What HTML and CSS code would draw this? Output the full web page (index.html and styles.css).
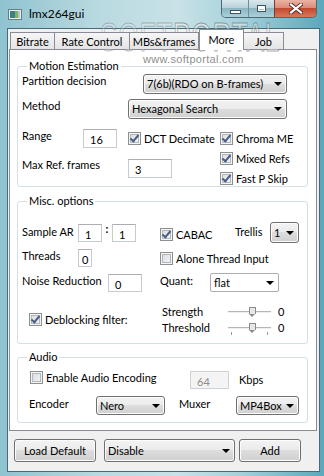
FILE: index.html
```html
<!DOCTYPE html>
<html>
<head>
    <title>lmx264gui</title>
    <link rel="stylesheet" href="styles.css">
</head>
<body>
<div class="window">
    <div class="titlebar">
        <svg class="app-icon" width="14" height="11" viewBox="0 0 14 11">
            <rect x="0.5" y="0.5" width="13" height="10" fill="#e8eef0" stroke="#6c7c84"/>
            <rect x="2" y="2" width="5" height="7" fill="#3f7f8c"/>
            <rect x="7" y="2" width="3" height="7" fill="#7fb55a"/>
            <rect x="10" y="2" width="2" height="7" fill="#b9c6cc"/>
        </svg>
        <span class="title">lmx264gui</span>
        <div class="caption-buttons">
            <div class="cap-btn cap-min"><span class="min-glyph"></span></div>
            <div class="cap-btn cap-max"><span class="max-glyph"></span></div>
            <div class="cap-btn cap-close">
                <svg width="14" height="11" viewBox="0 0 14 11">
                    <path d="M2 1.5 12 9.5M12 1.5 2 9.5" stroke="#5a2a22" stroke-width="4" stroke-linecap="square"/>
                    <path d="M2 1.5 12 9.5M12 1.5 2 9.5" stroke="#fff" stroke-width="2.2" stroke-linecap="square"/>
                </svg>
            </div>
        </div>
    </div>

    <div class="client">
        <div class="tabs">
            <div class="tab" style="width:45px">Bitrate</div>
            <div class="tab" style="width:75px">Rate Control</div>
            <div class="tab" style="width:69px">MBs&amp;frames</div>
            <div class="tab active" style="width:45px">More</div>
            <div class="tab" style="width:40px">Job</div>
        </div>

        <div class="page">
            <!-- Motion Estimation -->
            <fieldset class="group group-me">
                <legend>Motion Estimation</legend>
                <div class="row row-part">
                    <span class="lbl" style="width:121px">Partition decision</span>
                    <div class="combo" style="width:144px"><span>7(6b)(RDO on B-frames)</span><i class="arrow"></i></div>
                </div>
                <div class="row row-method">
                    <span class="lbl" style="width:106px">Method</span>
                    <div class="combo" style="width:159px"><span>Hexagonal Search</span><i class="arrow"></i></div>
                </div>
                <div class="me-grid">
                    <span class="lbl g-range">Range</span>
                    <div class="edit g-range-box" style="width:34px">16</div>
                    <label class="check g-dct"><span class="box on"></span>DCT Decimate</label>
                    <label class="check g-chroma"><span class="box on"></span>Chroma ME</label>
                    <label class="check g-mixed"><span class="box on"></span>Mixed Refs</label>
                    <label class="check g-fastp"><span class="box on"></span>Fast P Skip</label>
                    <span class="lbl g-maxref">Max Ref. frames</span>
                    <div class="edit g-maxref-box" style="width:44px">3</div>
                </div>
            </fieldset>

            <!-- Misc. options -->
            <fieldset class="group group-misc">
                <legend>Misc. options</legend>
                <div class="row row-sar">
                    <span class="lbl" style="width:56px">Sample AR</span>
                    <div class="edit" style="width:24px">1</div>
                    <span class="colon">:</span>
                    <div class="edit" style="width:24px">1</div>
                    <label class="check" style="margin-left:24px;width:75px"><span class="box on"></span>CABAC</label>
                    <span class="lbl" style="width:35px">Trellis</span>
                    <div class="combo combo-small" style="width:29px"><span>1</span><i class="arrow"></i></div>
                </div>
                <div class="row row-threads">
                    <span class="lbl" style="width:56px">Threads</span>
                    <div class="edit" style="width:14px;padding-left:3px">0</div>
                    <label class="check" style="margin-left:68px"><span class="box"></span>Alone Thread Input</label>
                </div>
                <div class="row row-noise">
                    <span class="lbl" style="width:86px">Noise Reduction</span>
                    <div class="edit" style="width:34px">0</div>
                    <span class="lbl" style="width:50px;margin-left:18px">Quant:</span>
                    <div class="combo combo-white" style="width:69px"><span>flat</span><i class="arrow"></i></div>
                </div>
                <div class="row row-deblock">
                    <label class="check deblock"><span class="box on"></span>Deblocking filter:</label>
                    <div class="sliders">
                        <div class="slider-row">
                            <span class="lbl" style="width:66px">Strength</span>
                            <div class="slider"><i class="thumb"></i></div>
                            <span class="lbl">0</span>
                        </div>
                        <div class="slider-row">
                            <span class="lbl" style="width:66px">Threshold</span>
                            <div class="slider ticks"><i class="thumb"></i></div>
                            <span class="lbl">0</span>
                        </div>
                    </div>
                </div>
            </fieldset>

            <!-- Audio -->
            <fieldset class="group group-audio">
                <legend>Audio</legend>
                <div class="row row-audio1">
                    <label class="check" style="margin-left:8px;width:160px"><span class="box"></span>Enable Audio Encoding</label>
                    <div class="edit disabled" style="width:39px">64</div>
                    <span class="lbl" style="margin-left:10px">Kbps</span>
                </div>
                <div class="row row-audio2">
                    <span class="lbl" style="width:67px;margin-left:7px">Encoder</span>
                    <div class="combo" style="width:69px"><span>Nero</span><i class="arrow"></i></div>
                    <span class="lbl" style="width:57px;margin-left:14px">Muxer</span>
                    <div class="combo" style="width:63px"><span>MP4Box</span><i class="arrow"></i></div>
                </div>
            </fieldset>
        </div>

        <div class="bottom-bar">
            <div class="button" style="width:82px">Load Default</div>
            <div class="combo" style="width:131px;margin-left:8px"><span>Disable</span><i class="arrow"></i></div>
            <div class="button" style="width:62px;margin-left:4px">Add</div>
        </div>
    </div>

    <div class="watermark">
        <span class="wm-big"><span class="wm-soft">SOFT</span><span class="wm-portal">PORTAL</span></span>
        <span class="wm-url">www.softportal.com</span>
    </div>
</div>
</body>
</html>
```

FILE: styles.css
```css
body {
    margin: 0;
    font-family: Lato, "Liberation Sans", sans-serif;
    font-size: 11px;
    color: #000;
}
.window {
    position: relative;
    width: 324px;
    height: 476px;
    box-sizing: border-box;
    padding: 0 4px 4px 7px;
    display: flex;
    flex-direction: column;
    background: linear-gradient(to right, #8fc3d0 0%, #b9d9e0 30%, #c8e2e7 55%, #a3d0da 75%, #5aa8bb 100%);
    overflow: hidden;
}
.titlebar {
    height: 28px;
    flex: none;
    display: flex;
    align-items: flex-start;
    padding-left: 1px;
}
.app-icon {
    margin-top: 9px;
}
.title {
    margin-left: 7px;
    margin-top: 7px;
    font-size: 12px;
    line-height: 14px;
}
.caption-buttons {
    margin-left: auto;
    margin-right: 3px;
    display: flex;
    height: 18px;
    border: 1px solid #4b6875;
    border-top: none;
    border-radius: 0 0 5px 5px;
    overflow: hidden;
    box-sizing: border-box;
}
.cap-btn {
    height: 100%;
    display: flex;
    align-items: center;
    justify-content: center;
    background: linear-gradient(#d9e8ec 0%, #b7d1d8 48%, #8eb5c0 50%, #a9d2dc 100%);
    border-left: 1px solid #6f8f9a;
}
.cap-min { width: 26px; border-left: none; }
.cap-max { width: 25px; }
.cap-close {
    width: 41px;
    background: linear-gradient(#ebb3a4 0%, #d98b75 48%, #c24a30 50%, #d9785a 100%);
    border-left: 1px solid #7a3a2e;
}
.min-glyph {
    width: 9px;
    height: 2px;
    margin-top: 7px;
    background: #fff;
    border: 1px solid #3d5561;
}
.max-glyph {
    width: 7px;
    height: 5px;
    border: 1px solid #3d5561;
    box-shadow: inset 0 0 0 1px #fff, inset 0 2px 0 1px #fff;
    background: #a7c4cc;
}
.client {
    flex: 1;
    display: flex;
    flex-direction: column;
    background: #f0f0f0;
    border: 1px solid #476b78;
    padding: 0 1px 0 1px;
}
.tabs {
    height: 20px;
    display: flex;
    align-items: flex-end;
    padding-left: 1px;
    position: relative;
    z-index: 1;
}
.tab {
    height: 17px;
    box-sizing: border-box;
    border: 1px solid #898c95;
    border-bottom: none;
    border-left: none;
    background: linear-gradient(#f6f6f6, #e4e4e4);
    text-align: center;
    line-height: 16px;
    padding-top: 1px;
}
.tab:first-child {
    border-left: 1px solid #898c95;
}
.tab.active {
    height: 21px;
    margin-bottom: -1px;
    background: #fff;
    border-left: 1px solid #898c95;
    line-height: 18px;
}
.page {
    height: 382px;
    box-sizing: border-box;
    margin-right: 1px;
    border: 1px solid #898c95;
    background: #fff;
    padding: 9px 8px 0 7px;
}
.group {
    margin: 0;
    padding: 0 4px 0 4px;
    border: 1px solid #d5dfe5;
    border-radius: 3px;
    min-width: 0;
}
.group legend {
    margin-left: 5px;
    padding: 0 2px;
    line-height: 14px;
}
.group-me { padding-top: 1px; height: 128px; box-sizing: border-box; }
.group-misc { margin-top: 7px; height: 150px; box-sizing: border-box; }
.group-audio { margin-top: 6px; height: 73px; box-sizing: border-box; }
.row {
    display: flex;
    align-items: flex-start;
}
.lbl {
    line-height: 14px;
    white-space: nowrap;
    flex: none;
}
.row-part { height: 20px; }
.row-method { height: 20px; margin-top: 5px; }
.me-grid {
    margin-top: 10px;
    display: grid;
    grid-template-columns: 61px 45px 92px 1fr;
    grid-template-rows: 20px 20px 16px;
}
.g-range { grid-column: 1; grid-row: 1; }
.g-range-box { grid-column: 2; grid-row: 1; }
.g-dct { grid-column: 3; grid-row: 1; margin-top: 3px; }
.g-chroma { grid-column: 4; grid-row: 1; margin-top: 3px; }
.g-mixed { grid-column: 4; grid-row: 2; margin-top: 3px; }
.g-fastp { grid-column: 4; grid-row: 3; margin-top: 3px; }
.g-maxref { grid-column: 1 / 3; grid-row: 2; margin-top: 9px; }
.g-maxref-box { grid-column: 3; grid-row: 2 / 4; margin-top: 10px; }

.edit {
    height: 19px;
    box-sizing: border-box;
    border: 1px solid #c5cbd3;
    border-top-color: #abadb3;
    background: #fff;
    padding: 3px 0 0 6px;
    line-height: 14px;
    flex: none;
}
.edit.disabled {
    background: #f4f4f4;
    color: #8d8d8d;
    border-color: #cfd3d9;
}
.combo, .button {
    height: 20px;
    box-sizing: border-box;
    border: 1px solid #707070;
    border-radius: 3px;
    background: linear-gradient(#f3f3f3 0%, #ebebeb 48%, #dddddd 50%, #d0d0d0 100%);
    box-shadow: inset 0 0 0 1px #fcfcfc;
    display: flex;
    align-items: center;
    flex: none;
    line-height: 14px;
}
.combo span {
    flex: 1;
    padding-left: 3px;
    white-space: nowrap;
    overflow: hidden;
}
.combo-white {
    background: #fff;
    border-color: #abadb3;
    border-radius: 2px;
    box-shadow: none;
}
.combo-small span { padding-left: 3px; }
.arrow {
    width: 0;
    height: 0;
    border-left: 4px solid transparent;
    border-right: 4px solid transparent;
    border-top: 4px solid #000;
    margin-right: 4px;
    margin-left: 2px;
    flex: none;
}
.check {
    display: flex;
    align-items: center;
    gap: 3px;
    height: 13px;
    line-height: 14px;
    white-space: nowrap;
    flex: none;
}
.box {
    width: 13px;
    height: 13px;
    box-sizing: border-box;
    border: 1px solid #8e8f8f;
    background: linear-gradient(135deg, #d5d9de, #f7f7f7);
    box-shadow: inset 0 0 0 1px #f4f4f4, inset 0 0 0 2px #b3b8bd;
    flex: none;
    position: relative;
}
.box.on::after {
    content: "";
    position: absolute;
    left: 3px;
    top: 0px;
    width: 3px;
    height: 7px;
    border-right: 2px solid #4b5d86;
    border-bottom: 2px solid #4b5d86;
    transform: rotate(40deg);
}
.colon {
    width: 10px;
    text-align: center;
    line-height: 14px;
    font-weight: bold;
}
.row-sar { height: 21px; margin-top: 14px; }
.row-sar .lbl:first-child { margin-top: 3px; }
.row-sar .edit { height: 18px; margin-top: 2px; }
.row-sar .check { margin-top: 6px; }
.row-sar .lbl + .combo, .row-sar .combo { height: 21px; }
.row-sar .check + .lbl { margin-top: 3px; }
.row-threads { height: 18px; margin-top: 6px; }
.row-threads .edit { height: 18px; }
.row-threads .check { margin-top: 3px; }
.row-noise { height: 19px; margin-top: 6px; }
.row-noise .lbl { margin-top: 1px; }
.row-noise .edit { height: 18px; margin-top: 1px; }
.row-noise .combo { height: 19px; }
.row-deblock { height: 32px; margin-top: 12px; }
.deblock {
    margin-left: 7px;
    margin-top: 9px;
    width: 133px;
}
.sliders {
    display: flex;
    flex-direction: column;
}
.slider-row {
    display: flex;
    align-items: center;
    height: 16px;
}
.slider {
    width: 43px;
    height: 16px;
    margin-right: 7px;
    position: relative;
    flex: none;
}
.slider::before {
    content: "";
    position: absolute;
    left: 0;
    right: 0;
    top: 7px;
    height: 1px;
    background: #b6b6b6;
    border-bottom: 1px solid #eeeeee;
}
.slider.ticks::after {
    content: "";
    position: absolute;
    left: 3px;
    right: 3px;
    top: 12px;
    height: 3px;
    border-left: 1px solid #9a9a9a;
    border-right: 1px solid #9a9a9a;
}
.thumb {
    position: absolute;
    left: 21px;
    top: 3px;
    width: 5px;
    height: 6px;
    background: #e8e8e8;
    border: 1px solid #8a8a8a;
    border-bottom: none;
}
.thumb::after {
    content: "";
    position: absolute;
    left: -1px;
    top: 6px;
    border-left: 3.5px solid transparent;
    border-right: 3.5px solid transparent;
    border-top: 3px solid #8a8a8a;
}
.row-audio1 { height: 18px; margin-top: 7px; }
.row-audio1 .check { margin-top: 0; }
.row-audio1 .edit { height: 18px; }
.row-audio1 .lbl { margin-top: 2px; }
.row-audio2 { height: 19px; margin-top: 7px; }
.row-audio2 .lbl { margin-top: 1px; }
.row-audio2 .combo { height: 19px; }
.bottom-bar {
    flex: 1;
    display: flex;
    align-items: flex-start;
    padding: 8px 0 0 5px;
}
.bottom-bar .button, .bottom-bar .combo {
    height: 23px;
}
.button {
    justify-content: center;
}
.watermark {
    position: absolute;
    left: 100px;
    top: 20px;
    pointer-events: none;
    display: flex;
    flex-direction: column;
}
.wm-big {
    font-family: "Liberation Sans", sans-serif;
    font-size: 40px;
    line-height: 34px;
    transform: scaleX(0.66);
    transform-origin: left;
    white-space: nowrap;
    letter-spacing: 1px;
}
.wm-soft {
    color: rgba(255, 255, 255, 0.2);
    -webkit-text-stroke: 1px rgba(110, 110, 110, 0.45);
}
.wm-portal {
    color: rgba(255, 255, 255, 0.35);
    -webkit-text-stroke: 1px rgba(90, 90, 90, 0.55);
}
.wm-url {
    margin-left: 43px;
    font-family: "Liberation Sans", sans-serif;
    font-size: 11px;
    line-height: 11px;
    color: rgba(110, 110, 110, 0.8);
    letter-spacing: 0.3px;
}
```
